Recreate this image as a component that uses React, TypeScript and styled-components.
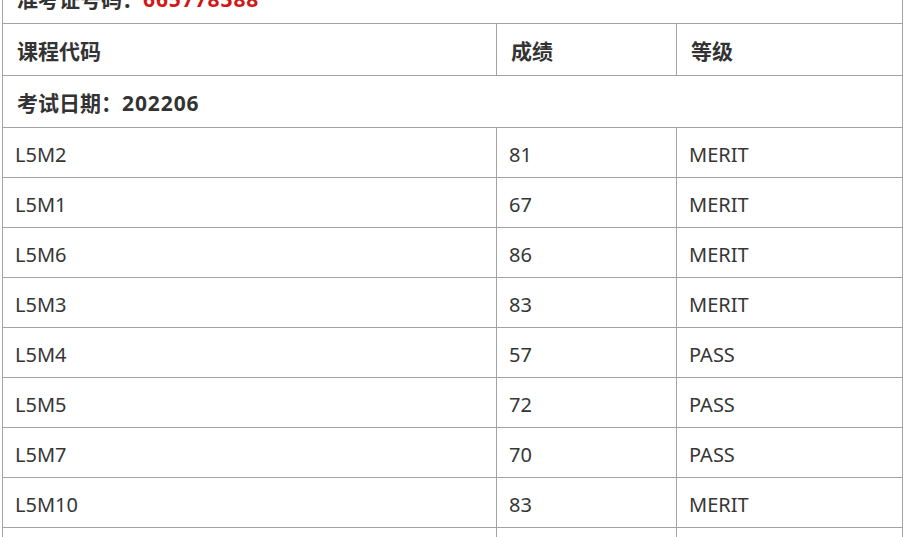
import React from 'react'
import styled, { createGlobalStyle } from 'styled-components'

const rows = [
  { code: 'L5M2', score: '81', grade: 'MERIT' },
  { code: 'L5M1', score: '67', grade: 'MERIT' },
  { code: 'L5M6', score: '86', grade: 'MERIT' },
  { code: 'L5M3', score: '83', grade: 'MERIT' },
  { code: 'L5M4', score: '57', grade: 'PASS' },
  { code: 'L5M5', score: '72', grade: 'PASS' },
  { code: 'L5M7', score: '70', grade: 'PASS' },
  { code: 'L5M10', score: '83', grade: 'MERIT' },
]

export default function App() {
  return (
    <>
      <GlobalStyle />
      <Viewport>
        <ScoreTable>
          <colgroup>
            <Col $width={494} />
            <Col $width={180} />
            <Col $width={226} />
          </colgroup>
          <tbody>
            <Row $height={52}>
              <Cell colSpan={3} $bold>
                准考证号码：<Digits $red>665778388</Digits>
              </Cell>
            </Row>
            <Row $height={52}>
              <Cell $bold>课程代码</Cell>
              <Cell $bold>成绩</Cell>
              <Cell $bold>等级</Cell>
            </Row>
            <Row $height={52}>
              <Cell colSpan={3} $bold>
                考试日期：<Digits>202206</Digits>
              </Cell>
            </Row>
            {rows.map(r => (
              <Row key={r.code} $height={50}>
                <Cell>{r.code}</Cell>
                <Cell>{r.score}</Cell>
                <Cell>{r.grade}</Cell>
              </Row>
            ))}
            <Row $height={50}>
              <Cell />
              <Cell />
              <Cell />
            </Row>
          </tbody>
        </ScoreTable>
      </Viewport>
    </>
  )
}

const GlobalStyle = createGlobalStyle`
  body {
    margin: 0;
    background: #fff;
    color: #333;
    font-family: "Noto Sans", "Noto Sans CJK SC", sans-serif;
  }
`

const Viewport = styled.div`
  height: 537px;
  overflow: hidden;
  padding-left: 2px;
`

const ScoreTable = styled.table`
  margin-top: -29px;
  width: 900px;
  border-collapse: collapse;
  table-layout: fixed;
`

const Col = styled.col<{ $width: number }>`
  width: ${p => p.$width}px;
`

const Row = styled.tr<{ $height: number }>`
  height: ${p => p.$height}px;
`

const Cell = styled.td<{ $bold?: boolean }>`
  border: 1px solid #a3a3a3;
  padding: ${p => (p.$bold ? '0 13px 0 14px' : '3px 13px 0 12px')};
  font-size: ${p => (p.$bold ? 21 : 20)}px;
  font-weight: ${p => (p.$bold ? 700 : 400)};
  color: ${p => (p.$bold ? '#333' : '#363636')};
  vertical-align: middle;
  white-space: nowrap;
`

const Digits = styled.span<{ $red?: boolean }>`
  letter-spacing: 0.9px;
  color: ${p => (p.$red ? '#d01818' : 'inherit')};
`
